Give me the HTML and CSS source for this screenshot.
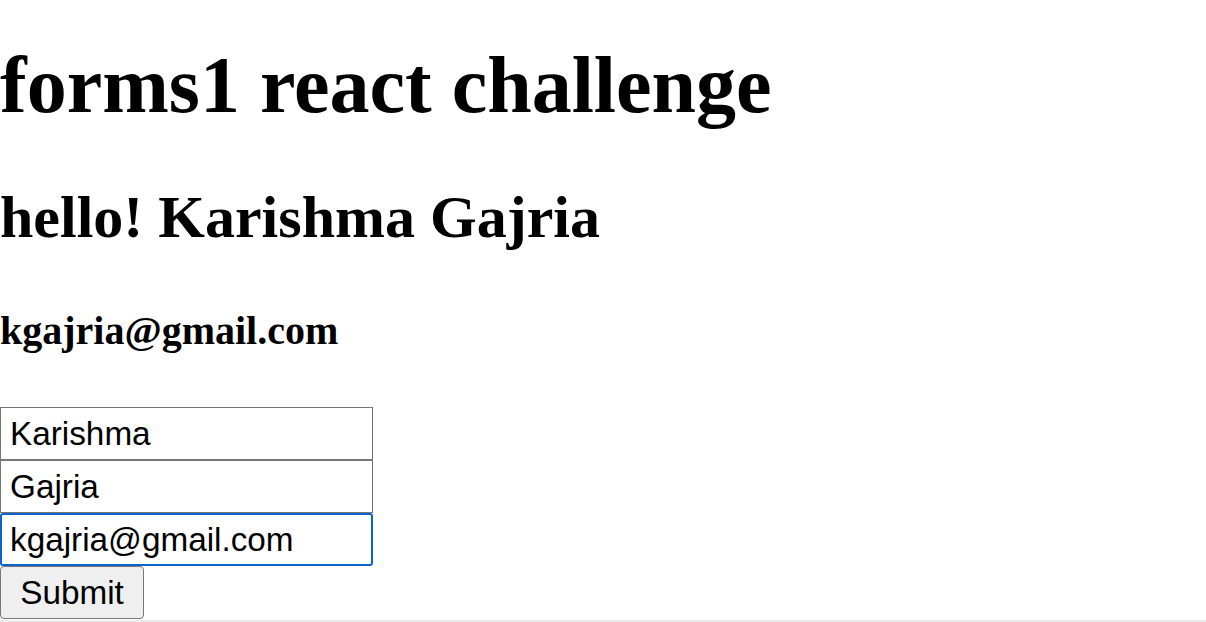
FILE: index.html
```html
<!DOCTYPE html>
<html lang="en">
<head>
<meta charset="utf-8">
<title>forms1 react challenge</title>
<link rel="stylesheet" href="styles.css">
</head>
<body>
<div class="app">
  <h1 class="title">forms1 react challenge</h1>
  <h2 class="greeting">hello! Karishma Gajria</h2>
  <h4 class="email">kgajria@gmail.com</h4>
  <form class="form">
    <input class="field" type="text" value="Karishma">
    <input class="field" type="text" value="Gajria">
    <input class="field field-focused" type="email" value="kgajria@gmail.com">
    <button class="submit" type="button">Submit</button>
  </form>
  <div class="edge"></div>
</div>
</body>
</html>
```

FILE: styles.css
```css
html, body {
  margin: 0;
  padding: 0;
  background: #ffffff;
}

.app {
  font-family: "Liberation Serif", "Times New Roman", serif;
  color: #000000;
  display: flow-root;
}

.title {
  font-size: 80px;
  font-weight: bold;
  line-height: 1.15;
  margin: 39px 0 52px;
}

.greeting {
  font-size: 60px;
  font-weight: bold;
  line-height: 1.15;
  margin: 0 0 56px;
}

.email {
  font-size: 40px;
  font-weight: bold;
  line-height: 1.15;
  margin: 0 0 53px;
}

.form {
  display: flex;
  flex-direction: column;
  align-items: flex-start;
  margin: 0;
}

.field {
  box-sizing: border-box;
  width: 373px;
  height: 53px;
  margin: 0;
  padding: 0 9px;
  border: 1px solid #767676;
  border-radius: 0;
  background: #ffffff;
  color: #000000;
  font-family: "Liberation Sans", Arial, sans-serif;
  font-size: 33.3px;
  outline: none;
}

.field-focused {
  border: 2px solid #0b63cc;
  border-radius: 3px;
  padding: 0 8px;
}

.submit {
  box-sizing: border-box;
  width: 144px;
  height: 53px;
  margin: 0;
  padding: 0;
  border: 1px solid #767676;
  border-radius: 4px;
  background: #efefef;
  color: #000000;
  font-family: "Liberation Sans", Arial, sans-serif;
  font-size: 33.3px;
}

.edge {
  margin-top: 1px;
  height: 2px;
  background: #ebebeb;
}
```
